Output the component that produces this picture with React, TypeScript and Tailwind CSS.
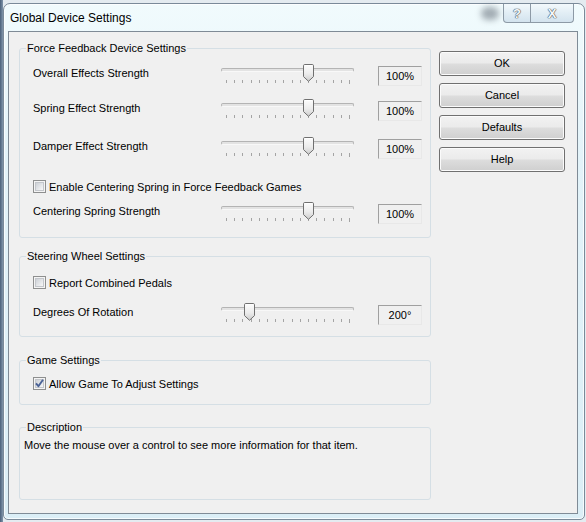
import { useId } from "react";

const TICK_XS = Array.from({ length: 16 }, (_, i) => 5.5 + Math.round((i * 123) / 15));

function Thumb({ left }: { left: number }) {
  const id = useId();
  return (
    <svg
      width="11"
      height="18"
      viewBox="0 0 11 18"
      className="absolute top-0"
      style={{ left }}
    >
      <defs>
        <linearGradient id={id} x1="0" y1="0" x2="0" y2="1">
          <stop offset="0" stopColor="#fdfdfd" />
          <stop offset="0.55" stopColor="#ececec" />
          <stop offset="1" stopColor="#cdcdcd" />
        </linearGradient>
      </defs>
      <path
        d="M1.8 0.5 H9.2 Q10.5 0.5 10.5 1.8 V12.6 L5.5 17.3 L0.5 12.6 V1.8 Q0.5 0.5 1.8 0.5 Z"
        fill={`url(#${id})`}
        stroke="#707070"
      />
      <path d="M1.5 1.5 H9.5" stroke="#ffffff" />
    </svg>
  );
}

function Slider({ thumb }: { thumb: number }) {
  return (
    <div className="relative h-[22px] w-[133px] shrink-0">
      <div className="mt-[4px] h-[4px] rounded-[2px] border border-[#b4b4b4] border-b-[#f8f8f8] bg-[#e3e3e3]" />
      <svg width="133" height="4" className="mt-[8px] block">
        {TICK_XS.map((x, i) => (
          <line
            key={i}
            x1={x}
            x2={x}
            y1="0"
            y2={i === TICK_XS.length - 1 ? 4 : 3}
            stroke="#a4a4a4"
          />
        ))}
      </svg>
      <Thumb left={thumb} />
    </div>
  );
}

function SliderRow({
  label,
  value,
  thumb,
  className = "",
}: {
  label: string;
  value: string;
  thumb: number;
  className?: string;
}) {
  return (
    <div className={`ml-[6px] flex h-[22px] items-start ${className}`}>
      <div className="mt-[2px] w-[188px] shrink-0 leading-[14px]">{label}</div>
      <Slider thumb={thumb} />
      <div className="ml-[24px] mt-[2px] flex h-[20px] w-[44px] shrink-0 items-center justify-center border border-[#a0a0a0] border-b-[#e8e8e8] border-r-[#e8e8e8] leading-[14px]">
        {value}
      </div>
    </div>
  );
}

function CheckBox({ checked = false }: { checked?: boolean }) {
  return (
    <span className="relative flex h-[13px] w-[13px] shrink-0 items-center justify-center border border-[#8e8f8f] bg-[#f4f4f4]">
      <span className="h-[9px] w-[9px] border border-[#c3c6cb] bg-[linear-gradient(135deg,#cdd1d6_0%,#e4e6e9_55%,#f7f7f7_100%)]" />
      {checked && (
        <svg width="13" height="13" viewBox="0 0 13 13" className="absolute -left-px -top-px">
          <path
            d="M3 6.3 L5.4 9.2 L10 2.8"
            fill="none"
            stroke="#4a6296"
            strokeWidth="1.9"
            strokeLinejoin="round"
          />
        </svg>
      )}
    </span>
  );
}

function CheckRow({
  label,
  checked,
  className = "",
}: {
  label: string;
  checked?: boolean;
  className?: string;
}) {
  return (
    <div className={`ml-[6px] flex h-[13px] items-center gap-[3px] ${className}`}>
      <CheckBox checked={checked} />
      <span className="leading-[14px]">{label}</span>
    </div>
  );
}

function Group({
  title,
  className = "",
  children,
}: {
  title: string;
  className?: string;
  children: React.ReactNode;
}) {
  return (
    <fieldset
      className={`w-[412px] rounded-[3px] border border-[#d5dfe5] pl-[7px] pr-[7px] ${className}`}
    >
      <legend className="-ml-px px-px leading-[14px]">{title}</legend>
      {children}
    </fieldset>
  );
}

function PushButton({ label }: { label: string }) {
  return (
    <button
      type="button"
      className="flex h-[25px] w-[126px] items-center justify-center rounded-[3px] border border-[#707070] bg-[linear-gradient(180deg,#f2f2f2_0%,#ebebeb_48%,#dddddd_52%,#cfcfcf_100%)] pb-px leading-[14px] text-black shadow-[inset_0_0_0_1px_#fbfbfb]"
    >
      {label}
    </button>
  );
}

function CaptionButtons() {
  return (
    <div className="flex h-[19px] self-start">
      <div className="flex w-[28px] items-center justify-center rounded-bl-[4px] border border-t-0 border-[#8d9aa6] bg-[linear-gradient(180deg,#f3f9fc_0%,#e2eef5_50%,#d3e3ee_100%)] text-[13px] font-bold leading-none text-[#f6f8fa] [text-shadow:0_0_1px_#46505a,0_0_1px_#46505a,0_0_1px_#46505a]">
        ?
      </div>
      <div className="flex w-[43px] items-center justify-center rounded-br-[4px] border border-l-0 border-t-0 border-[#8d9aa6] bg-[linear-gradient(180deg,#f3f9fc_0%,#e2eef5_50%,#d3e3ee_100%)] text-[13px] font-bold leading-none text-[#f6f8fa] [text-shadow:0_0_1px_#46505a,0_0_1px_#46505a,0_0_1px_#46505a]">
        X
      </div>
    </div>
  );
}

export default function App() {
  return (
    <div className="h-[522px] w-[586px] overflow-hidden bg-[linear-gradient(90deg,#4a607a_0px,#8196ab_3px,#e4ebf0_3px)] pt-[3px] font-['Liberation_Sans',Arial,sans-serif] text-[11px] text-black">
      <div className="ml-[3px] flex h-[517px] w-[582px] flex-col rounded-b-[5px] rounded-t-[7px] border border-[#7a8a99] bg-[linear-gradient(180deg,#f1fbfd_0%,#e3f3f9_30%,#dbeef6_100%)] shadow-[inset_0_0_0_1px_rgba(255,255,255,0.75)]">
        {/* title bar */}
        <div className="flex h-[27px] shrink-0 items-center pl-[6px] pr-[10px]">
          <span className="mt-px text-[12px] leading-[15px]">Global Device Settings</span>
          <div className="flex-1" />
          <div className="mr-[4px] mt-[3px] h-[13px] w-[18px] self-start rounded-full bg-[#6e7882] opacity-60 blur-[3px]" />
          <CaptionButtons />
        </div>

        {/* client area */}
        <div className="flex flex-1 pb-[5px] pl-[4px] pr-[6px]">
          <div className="flex flex-1 gap-[8px] border border-[#7f8b96] bg-[#f0f0f0] pl-[10px] pt-[9px]">
            <div className="flex w-[412px] flex-col">
              <Group title="Force Feedback Device Settings" className="pb-[13px]">
                <SliderRow className="mt-[9px]" label="Overall Effects Strength" value="100%" thumb={82} />
                <SliderRow className="mt-[13px]" label="Spring Effect Strength" value="100%" thumb={82} />
                <SliderRow className="mt-[16px]" label="Damper Effect Strength" value="100%" thumb={82} />
                <CheckRow className="mt-[21px]" label="Enable Centering Spring in Force Feedback Games" />
                <SliderRow className="mt-[9px]" label="Centering Spring Strength" value="100%" thumb={82} />
              </Group>

              <Group title="Steering Wheel Settings" className="mt-[11px] pb-[11px]">
                <CheckRow className="mt-[13px]" label="Report Combined Pedals" />
                <SliderRow className="mt-[14px]" label="Degrees Of Rotation" value="200°" thumb={23} />
              </Group>

              <Group title="Game Settings" className="mt-[16px] pb-[14px]">
                <CheckRow className="mt-[10px]" label="Allow Game To Adjust Settings" checked />
              </Group>

              <Group title="Description" className="mt-[15px] h-[80px]">
                <p className="-ml-[3px] mt-[4px] leading-[14px]">
                  Move the mouse over a control to see more information for that item.
                </p>
              </Group>
            </div>

            <div className="mt-[10px] flex flex-col gap-[7px]">
              <PushButton label="OK" />
              <PushButton label="Cancel" />
              <PushButton label="Defaults" />
              <PushButton label="Help" />
            </div>
          </div>
        </div>
      </div>
    </div>
  );
}
